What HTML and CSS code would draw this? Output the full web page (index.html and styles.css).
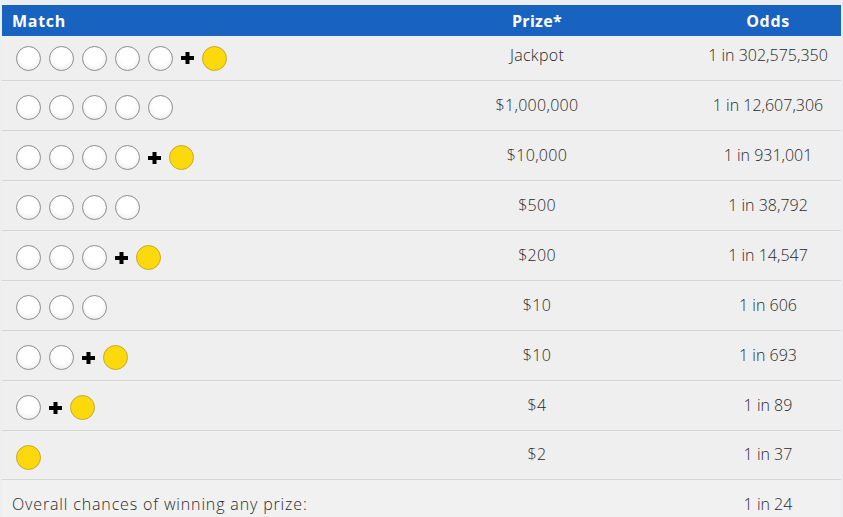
FILE: index.html
```html
<!DOCTYPE html>
<html lang="en">
<head>
<meta charset="utf-8">
<title>Powerball odds</title>
<link rel="stylesheet" href="styles.css">
</head>
<body>
<div class="odds-table">
  <div class="row head">
    <div class="cell match">Match</div>
    <div class="cell prize">Prize*</div>
    <div class="cell odds">Odds</div>
  </div>
  <div class="row first">
    <div class="cell match"><span class="ball"></span><span class="ball"></span><span class="ball"></span><span class="ball"></span><span class="ball"></span><svg class="plus" viewBox="0 0 13 12"><rect x="4.5" y="0" width="4" height="12"/><rect x="0" y="4" width="13" height="4"/></svg><span class="ball pb"></span></div>
    <div class="cell prize">Jackpot</div>
    <div class="cell odds">1 in 302,575,350</div>
  </div>
  <div class="row">
    <div class="cell match"><span class="ball"></span><span class="ball"></span><span class="ball"></span><span class="ball"></span><span class="ball"></span></div>
    <div class="cell prize">$1,000,000</div>
    <div class="cell odds">1 in 12,607,306</div>
  </div>
  <div class="row">
    <div class="cell match"><span class="ball"></span><span class="ball"></span><span class="ball"></span><span class="ball"></span><svg class="plus" viewBox="0 0 13 12"><rect x="4.5" y="0" width="4" height="12"/><rect x="0" y="4" width="13" height="4"/></svg><span class="ball pb"></span></div>
    <div class="cell prize">$10,000</div>
    <div class="cell odds">1 in 931,001</div>
  </div>
  <div class="row">
    <div class="cell match"><span class="ball"></span><span class="ball"></span><span class="ball"></span><span class="ball"></span></div>
    <div class="cell prize">$500</div>
    <div class="cell odds">1 in 38,792</div>
  </div>
  <div class="row">
    <div class="cell match"><span class="ball"></span><span class="ball"></span><span class="ball"></span><svg class="plus" viewBox="0 0 13 12"><rect x="4.5" y="0" width="4" height="12"/><rect x="0" y="4" width="13" height="4"/></svg><span class="ball pb"></span></div>
    <div class="cell prize">$200</div>
    <div class="cell odds">1 in 14,547</div>
  </div>
  <div class="row">
    <div class="cell match"><span class="ball"></span><span class="ball"></span><span class="ball"></span></div>
    <div class="cell prize">$10</div>
    <div class="cell odds">1 in 606</div>
  </div>
  <div class="row">
    <div class="cell match"><span class="ball"></span><span class="ball"></span><svg class="plus" viewBox="0 0 13 12"><rect x="4.5" y="0" width="4" height="12"/><rect x="0" y="4" width="13" height="4"/></svg><span class="ball pb"></span></div>
    <div class="cell prize">$10</div>
    <div class="cell odds">1 in 693</div>
  </div>
  <div class="row">
    <div class="cell match"><span class="ball"></span><svg class="plus" viewBox="0 0 13 12"><rect x="4.5" y="0" width="4" height="12"/><rect x="0" y="4" width="13" height="4"/></svg><span class="ball pb"></span></div>
    <div class="cell prize">$4</div>
    <div class="cell odds">1 in 89</div>
  </div>
  <div class="row ninth">
    <div class="cell match"><span class="ball pb"></span></div>
    <div class="cell prize">$2</div>
    <div class="cell odds">1 in 37</div>
  </div>
  <div class="row overall">
    <div class="cell match">Overall chances of winning any prize:</div>
    <div class="cell prize"></div>
    <div class="cell odds">1 in 24</div>
  </div>
</div>
</body>
</html>
```

FILE: styles.css
```css
html, body {
  margin: 0;
  padding: 0;
  background: #eceef1;
  font-family: "Open Sans", "Liberation Sans", sans-serif;
  font-weight: 300;
  color: #2a2a2a;
  font-size: 16px;
}

.odds-table {
  margin: 5px 2px 0 2px;
  width: 839px;
  background: #efefef;
}

.row {
  display: grid;
  grid-template-columns: 377px 316px 146px;
  height: 50px;
  box-sizing: border-box;
  padding-top: 4px;
  align-items: center;
  border-bottom: 1px solid #d5d5d5;
}

.row.head {
  height: 31px;
  padding-top: 0;
  background: #1862c0;
  color: #ffffff;
  font-weight: 700;
  letter-spacing: 0.7px;
  border-bottom: none;
}

.row.first {
  height: 45px;
  padding-top: 0;
}

.row.ninth {
  height: 49px;
}

.row.overall {
  height: 48px;
  padding-top: 0;
  border-bottom: none;
  background: #f1f1f1;
}

.cell {
  line-height: 20px;
}

.cell.prize {
  text-align: center;
  padding-bottom: 6px;
  letter-spacing: 0.3px;
}

.cell.odds {
  text-align: center;
  padding-bottom: 6px;
}

.row.head .cell,
.row.overall .cell {
  padding-bottom: 0;
}

.cell.match {
  display: flex;
  align-items: center;
  gap: 8px;
  padding-left: 14px;
}

.row.head .cell.match {
  padding-left: 10px;
}

.row.overall .cell.match {
  padding-left: 10px;
  letter-spacing: 0.85px;
  white-space: nowrap;
}

.ball {
  width: 25px;
  height: 25px;
  box-sizing: border-box;
  border-radius: 50%;
  border: 1px solid #8e8e8e;
  background: radial-gradient(circle at 50% 40%, #ffffff 45%, #e4e4e4 100%);
  flex: none;
}

.ball.pb {
  background: #fcd90c;
  border-color: #c6aa2a;
}

.plus {
  width: 13px;
  height: 12px;
  fill: #000000;
  flex: none;
}
```
